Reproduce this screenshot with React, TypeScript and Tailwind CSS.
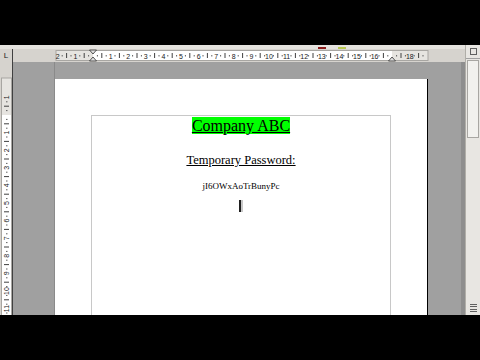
import React from 'react';

const CM = 17.6;
const ORIGIN_X = 80; // x of text start inside the ruler svg (93 - 13)

const HorizontalRuler: React.FC = () => {
  const ticks: React.ReactNode[] = [];
  for (let q = -8; q <= 84; q++) {
    const x = ORIGIN_X + (q * CM) / 4;
    if (x < 44 || x > 414) continue;
    if (q % 4 === 0) {
      const n = Math.abs(q / 4);
      if (n === 0 || n === 17) continue;
      ticks.push(
        <text key={q} x={x} y={9.5} fontSize={7} textAnchor="middle" fill="#202020" fontFamily="Liberation Sans, sans-serif">
          {n}
        </text>
      );
    } else if (q % 2 === 0) {
      ticks.push(<line key={q} x1={x} x2={x} y1={4} y2={9} stroke="#404040" strokeWidth={1} />);
    } else {
      ticks.push(<line key={q} x1={x} x2={x} y1={6} y2={7.5} stroke="#606060" strokeWidth={1} />);
    }
  }
  return (
    <svg width={452} height={13} className="block">
      <rect x={0} y={0} width={452} height={13} fill="#d6d3ce" />
      <rect x={43} y={1.5} width={372} height={10} fill="#e6e4e0" stroke="#a8a6a2" />
      <rect x={80} y={2} width={299} height={9} fill="#ffffff" />
      {ticks}
      <polygon points="76.5,1 83.5,1 80,5" fill="#e0e0e0" stroke="#303030" strokeWidth={0.8} />
      <polygon points="76.5,12 83.5,12 80,8" fill="#e0e0e0" stroke="#303030" strokeWidth={0.8} />
      <polygon points="375.5,12 382.5,12 379,8" fill="#e0e0e0" stroke="#303030" strokeWidth={0.8} />
    </svg>
  );
};

const VerticalRuler: React.FC = () => {
  const originY = 53; // y of text start (115 - 62)
  const ticks: React.ReactNode[] = [];
  for (let q = -4; q <= 60; q++) {
    const y = originY + (q * CM) / 4;
    if (y < 4 || y > 253) continue;
    if (q % 4 === 0) {
      const n = Math.abs(q / 4);
      if (n === 0) continue;
      ticks.push(
        <text
          key={q}
          x={6.5}
          y={y}
          fontSize={7}
          textAnchor="middle"
          dominantBaseline="central"
          fill="#202020"
          fontFamily="Liberation Sans, sans-serif"
          transform={`rotate(-90 6.5 ${y})`}
        >
          {n}
        </text>
      );
    } else if (q % 2 === 0) {
      ticks.push(<line key={q} x1={4} x2={9} y1={y} y2={y} stroke="#404040" strokeWidth={1} />);
    } else {
      ticks.push(<line key={q} x1={6} x2={7.5} y1={y} y2={y} stroke="#606060" strokeWidth={1} />);
    }
  }
  return (
    <svg width={13} height={253} className="block">
      <rect x={0} y={0} width={13} height={253} fill="#d6d3ce" />
      <rect x={1.5} y={16} width={10} height={240} fill="#e6e4e0" stroke="#a8a6a2" />
      <rect x={2} y={53} width={9} height={200} fill="#ffffff" />
      {ticks}
      <line x1={12.5} x2={12.5} y1={0} y2={253} stroke="#404040" />
    </svg>
  );
};

const App: React.FC = () => {
  return (
    <div className="w-[480px] h-[360px] bg-black flex flex-col overflow-hidden">
      <div className="h-[45px] shrink-0" />

      <div className="h-[270px] shrink-0 flex bg-[#d6d3ce]">
        <div className="flex-1 flex flex-col min-w-0">
          {/* toolbar remnant */}
          <div className="h-[4px] shrink-0 bg-[#e4e2de] flex items-end">
            <div className="ml-[318px] w-[8px] h-[2px] bg-[#8a1a1a]" />
            <div className="ml-[12px] w-[8px] h-[2px] bg-[#b8c850]" />
          </div>

          {/* ruler row */}
          <div className="h-[13px] shrink-0 flex">
            <div className="w-[13px] h-[13px] flex items-center justify-center border-r border-[#404040]">
              <span className="text-[8px] leading-none text-[#202020] font-['Liberation_Sans',sans-serif]">L</span>
            </div>
            <HorizontalRuler />
          </div>

          {/* workspace */}
          <div className="flex-1 flex min-h-0">
            <VerticalRuler />
            <div className="flex-1 bg-[#a0a0a0] overflow-hidden flex">
              <div className="w-[42px] shrink-0 border-r border-[#8a8a8a]" />
              <div className="mt-[17px] w-[373px] shrink-0 bg-white border-r border-black flex flex-col">
                <div className="mt-[36px] mx-[36px] flex-1 border-t border-l border-r border-[#c8c8c8] flex flex-col items-center font-['Liberation_Serif',serif] text-black">
                  <div className="h-[19px] leading-[19px] text-[16px]">
                    <span className="bg-[#00ff00] underline">Company ABC</span>
                  </div>
                  <div className="mt-[17px] h-[16px] leading-[16px] text-[12.5px] underline">Temporary Password:</div>
                  <div className="mt-[12px] h-[12px] leading-[12px] text-[9px]">jI6OWxAoTrBunyPc</div>
                  <div className="mt-[8px] flex">
                    <div className="w-[2px] h-[12px] bg-[#202020]" />
                    <div className="w-[2px] h-[12px] bg-[#c8c8c8]" />
                  </div>
                </div>
              </div>
              <div className="flex-1" />
              <div className="w-[4px] shrink-0 bg-[#8e8e8e]" />
            </div>
          </div>
        </div>

        {/* scrollbar */}
        <div className="w-[15px] shrink-0 flex flex-col bg-[#e8e6e2] border-l border-[#b0aea8]">
          <div className="h-[14px] border-b border-[#a0a0a0] flex items-center justify-center">
            <div className="w-[7px] h-[7px] border border-[#606060]" />
          </div>
          <div className="h-[78px] mx-[1px] mt-[1px] bg-[#f2f1ee] border border-[#a8a6a2]" />
          <div className="flex-1" />
          <div className="h-[14px] flex flex-col items-center justify-center gap-[2px]">
            <div className="w-[7px] h-[3px] border-t border-b border-[#606060]" />
            <div className="w-[7px] h-[3px] border-t border-b border-[#606060]" />
          </div>
        </div>
      </div>

      <div className="flex-1" />
    </div>
  );
};

export default App;
